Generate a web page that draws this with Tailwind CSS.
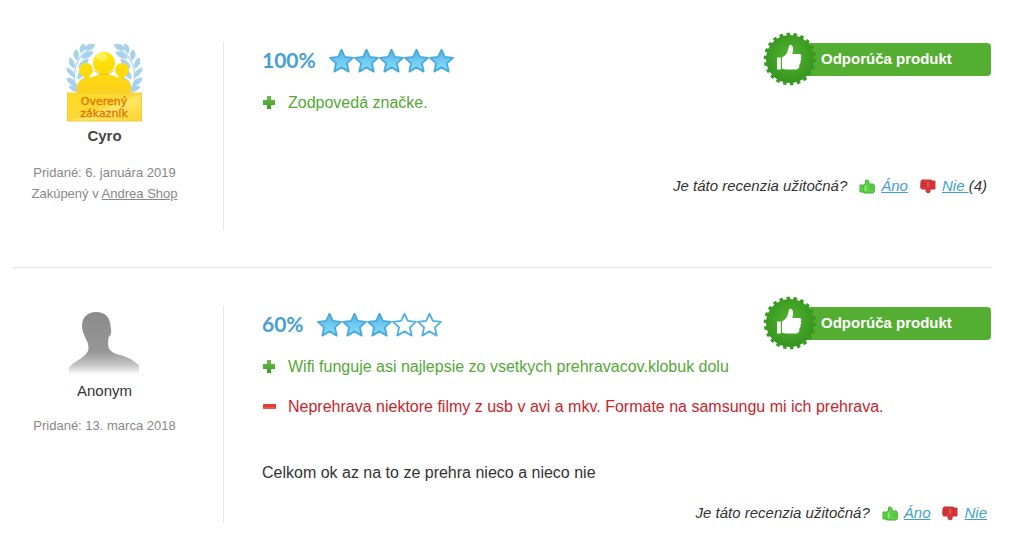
<!DOCTYPE html>
<html lang="sk">
<head>
    <meta charset="UTF-8">
    <meta name="viewport" content="width=device-width, initial-scale=1.0">
    <title>Recenzie</title>
    <script src="https://cdn.jsdelivr.net/npm/@tailwindcss/browser@4"></script>
</head>
<body class="bg-white font-['Liberation_Sans',Arial,sans-serif] text-[#333]">

    <!-- Shared icons -->
    <svg class="absolute size-0" aria-hidden="true">
        <defs>
            <linearGradient id="star-fill" x1="0" y1="0" x2="0" y2="1">
                <stop offset="0" stop-color="#58b4e6"/>
                <stop offset="1" stop-color="#84e0fa"/>
            </linearGradient>
            <radialGradient id="seal-fill" gradientUnits="userSpaceOnUse" cx="27" cy="24" r="29">
                <stop offset="0" stop-color="#52b52f"/>
                <stop offset="1" stop-color="#33921e"/>
            </radialGradient>
            <linearGradient id="plus-fill" x1="0" y1="0" x2="0" y2="1">
                <stop offset="0" stop-color="#6cc04a"/>
                <stop offset="1" stop-color="#3f9a25"/>
            </linearGradient>
        </defs>
        <symbol id="star" viewBox="0 0 25 26">
            <path d="M12.500 1.700l3.300 7.200 8.200.9-6.100 5.500 1.800 8.300-7.200-4.200-7.200 4.200 1.800-8.300L1 9.800l8.200-.9z" fill="url(#star-fill)" stroke="#49a8dc" stroke-width="1.800" stroke-linejoin="round"/>
        </symbol>
        <symbol id="star-empty" viewBox="0 0 25 26">
            <path d="M12.500 1.700l3.300 7.200 8.200.9-6.100 5.500 1.800 8.300-7.200-4.200-7.200 4.200 1.800-8.300L1 9.800l8.200-.9z" fill="#fff" stroke="#4fb0e0" stroke-width="1.800" stroke-linejoin="round"/>
        </symbol>
        <symbol id="plus" viewBox="0 0 14 14">
            <path d="M5 0h4v4h4v5H9v4H5V9H1V4h4z" fill="url(#plus-fill)"/>
        </symbol>
        <symbol id="minus" viewBox="0 0 14 14">
            <rect x="1" y="4" width="13" height="5" rx="1" fill="#e63a35"/>
            <path d="M2 8h11" stroke="#f0706a"/>
        </symbol>
        <symbol id="seal" viewBox="0 0 54 54">
            <circle cx="27" cy="27" r="24" fill="url(#seal-fill)"/>
            <!-- 22 teeth round the rim -->
            <circle cx="27" cy="27" r="24.500" fill="none" stroke="#389a22" stroke-width="3.600" pathLength="220" stroke-dasharray="5 5"/>
            <path d="M14 25.500h3.800v12H14zM19 25.200c3.500-.8 5.200-4 6.300-8.400.4-3.300 1.500-4.200 2.700-3.900 2.400.6 2.600 4.800 1.200 9.100h7c2.300 0 2.700 2.300 1.400 3.400 1.200 1.200.8 2.900-.4 3.600.8 1.300.3 2.700-.9 3.300.5 2.600-.7 5.200-2.900 5.200H24c-2 0-3-.2-5-.8z" fill="#fff"/>
        </symbol>
        <symbol id="thumb-up" viewBox="0 0 16 15">
            <path d="M1 6h3.500l2-1.500v-3C7.500.7 9.500 1 10 2.500V5h4.500l.8 1.500v6L14 14H5l-1-1H1z" fill="#5fd04a" stroke="#43ad35"/>
            <path d="M4.500 7v6M10.500 7.500h4M10.500 10h4" stroke="#43ad35" stroke-opacity=".6"/>
            <path d="M6.500 6.500v5.500" stroke="#9bea84" stroke-width="1.500"/>
        </symbol>
        <symbol id="thumb-down" viewBox="0 0 16 15">
            <path d="M1 2.500L2 1h9l1 1h3v8h-4l-1 1v2c-1 1.200-3.500 1-4-.5V10H1.500L.7 8.500z" fill="#d9363a" stroke="#c0393c"/>
            <path d="M11.500 2v7M1.500 4.500h4M1.500 7h4" stroke="#a51d22" stroke-opacity=".5"/>
            <path d="M8 3v5" stroke="#ea5a5c" stroke-width="1.500"/>
        </symbol>
    </svg>

    <main class="pl-3 pr-[23px] pt-[42px]">

        <article class="flex border-b border-[#e8e8e8] pb-[37px]">
            <aside class="w-[212px] shrink-0 border-r border-[#e8e8e8] pb-[26px] pr-[26px] text-center">
                <svg class="mx-auto h-[82px] w-[80px]" viewBox="0 0 80 82" role="img" aria-label="Overený zákazník">
                    <defs>
                        <linearGradient id="gold" gradientUnits="userSpaceOnUse" x1="0" y1="10" x2="0" y2="51">
                            <stop offset="0" stop-color="#ffe600"/>
                            <stop offset="1" stop-color="#fdd01c"/>
                        </linearGradient>
                        <linearGradient id="plate" x1="0" y1="0" x2="1" y2="1">
                            <stop offset="0" stop-color="#ffdc1c"/>
                            <stop offset=".5" stop-color="#ffd83a"/>
                            <stop offset=".55" stop-color="#ffe766"/>
                            <stop offset="1" stop-color="#ffd42a"/>
                        </linearGradient>
                        <g id="laurel">
                            <path d="M26 6C10 12 4 28 9 48" fill="none" stroke="#b5dcef" stroke-width="1.500"/>
                            <g fill="#a6d2ea" stroke="#a6d2ea">
                                <path d="M28 3c-4-2-9 0-11 4 4 2 9 0 11-4zM17 2c-4 1-5 6-3 9 3-2 5-6 3-9z"/>
                                <path d="M26 10c-5-1-10 2-11 6 5 1 10-2 11-6zM9 8c-3 3-3 7 1 10 2-4 2-8-1-10z"/>
                                <path d="M21 17c-5 1-9 4-9 9 5-1 9-4 9-9zM3 16c-2 4 0 8 4 10 1-4 0-8-4-10z"/>
                                <path d="M19 26c-5 2-9 6-8 11 5-2 8-6 8-11zM0 26c0 4 3 8 8 9-1-5-4-8-8-9z"/>
                                <path d="M19 35c-5 2-8 6-7 10 5-1 7-5 7-10zM0 36c1 5 5 8 10 8-2-5-5-8-10-8z"/>
                                <path d="M2 45c3 4 8 6 13 4-3-4-8-6-13-4z"/>
                            </g>
                        </g>
                    </defs>
                    <use href="#laurel" x="2"/>
                    <use href="#laurel" transform="matrix(-1 0 0 1 77 0)"/>
                    <g fill="url(#gold)">
                        <circle cx="21" cy="28" r="7"/>
                        <circle cx="57" cy="28" r="7"/>
                        <path d="M12 51c-1-9 2-14 8-14l-2-5h6l1 4c2-1 6-3 9-3v-5h10v5c3 0 7 1 9 3l1-4h6l-2 5c6 0 9 5 8 14z"/>
                        <circle cx="39" cy="21" r="11"/>
                    </g>
                    <path d="M29 28c4 6 16 6 20 0" fill="none" stroke="#eeb010" stroke-opacity=".7"/>
                    <ellipse cx="37" cy="15" rx="6" ry="4" fill="#fff36b" fill-opacity=".8"/>
                    <rect x="2.500" y="51" width="74" height="28" fill="url(#plate)" stroke="#f6c944"/>
                    <text x="39" y="63" text-anchor="middle" class="font-['DejaVu_Sans',sans-serif] text-[11px]" fill="#e07408" stroke="#e07408" stroke-width=".3">Overený</text>
                    <text x="39" y="75" text-anchor="middle" class="font-['DejaVu_Sans',sans-serif] text-[11px]" fill="#e07408" stroke="#e07408" stroke-width=".3">zákazník</text>
                </svg>
                <h3 class="mt-[2px] text-[15px] font-bold leading-5 text-[#444]">Cyro</h3>
                <p class="mt-4 text-[13px] leading-[21px] text-[#888]">Pridané: 6. januára 2019<br>Zakúpený v <a href="#" class="underline">Andrea Shop</a></p>
            </aside>

            <div class="min-w-0 grow pl-[38px]">
                <header class="flex h-9 items-start">
                    <strong class="font-[Lato,sans-serif] text-[21px] leading-9 text-[#46a0d0]">100%</strong>
                    <div class="ml-[13px] mt-1.5 flex" role="img" aria-label="5 z 5 hviezdičiek">
                        <svg class="h-[26px] w-[25px] overflow-visible"><use href="#star"/></svg>
                        <svg class="h-[26px] w-[25px]"><use href="#star"/></svg>
                        <svg class="h-[26px] w-[25px]"><use href="#star"/></svg>
                        <svg class="h-[26px] w-[25px]"><use href="#star"/></svg>
                        <svg class="h-[26px] w-[25px]"><use href="#star"/></svg>
                    </div>
                    <div class="relative ml-auto mr-px mt-px h-[33px] w-[201px] rounded bg-[#54ae31] pl-[31px] text-[15px] font-bold leading-8 text-white">
                        <svg class="absolute -left-[27px] -top-[11px] size-[54px]"><use href="#seal"/></svg>
                        Odporúča produkt
                    </div>
                </header>
                <ul class="mt-[15px] space-y-5 text-base leading-5">
                    <li class="flex items-center gap-3 text-[#54a836]"><svg class="size-[14px] shrink-0"><use href="#plus"/></svg>Zodpovedá značke.</li>
                </ul>
                <div class="mt-[63px] flex items-center justify-end pr-[5px] text-[15px] italic leading-5">
                    <span>Je táto recenzia užitočná?</span>
                    <svg class="ml-3 h-[15px] w-4"><use href="#thumb-up"/></svg>
                    <a href="#" class="ml-1.5 text-[#409fd0] underline">Áno</a>
                    <svg class="ml-3 h-[15px] w-4"><use href="#thumb-down"/></svg>
                    <a href="#" class="ml-1.5 whitespace-pre text-[#409fd0] underline">Nie </a>
                    <span>(4)</span>
                </div>
            </div>
        </article>

        <article class="mt-[38px] flex">
            <aside class="w-[212px] shrink-0 border-r border-[#e8e8e8] pr-[26px] text-center">
                <svg class="mx-auto h-[73px] w-[80px]" viewBox="0 0 80 73" role="img" aria-label="Anonym">
                    <defs>
                        <linearGradient id="shade" gradientUnits="userSpaceOnUse" x1="0" y1="6" x2="0" y2="72">
                            <stop offset="0" stop-color="#8b8b8b"/>
                            <stop offset=".6" stop-color="#969696"/>
                            <stop offset=".8" stop-color="#c4c4c4"/>
                            <stop offset=".95" stop-color="#fff"/>
                        </linearGradient>
                    </defs>
                    <path d="M17 20C17 11 23 6 31 6c9 0 14 5 14.500 14l.7 5c0 3-1 5-2.500 6-.7 4-1 7 0 11 3 5 7 6 13 7.500 7 2 12 5 17 9.500l1 11H4v-8c4-7 15-9 19-17 1-3 .5-6-1-10-2-4-5-10-5-15z" fill="url(#shade)"/>
                </svg>
                <h3 class="mt-[2px] text-[15px] leading-5">Anonym</h3>
                <p class="mt-[14px] text-[13px] leading-[21px] text-[#888]">Pridané: 13. marca 2018</p>
            </aside>

            <div class="min-w-0 grow pl-[38px]">
                <header class="flex h-9 items-start">
                    <strong class="font-[Lato,sans-serif] text-[21px] leading-9 text-[#46a0d0]">60%</strong>
                    <div class="ml-[13px] mt-1.5 flex" role="img" aria-label="3 z 5 hviezdičiek">
                        <svg class="h-[26px] w-[25px]"><use href="#star"/></svg>
                        <svg class="h-[26px] w-[25px]"><use href="#star"/></svg>
                        <svg class="h-[26px] w-[25px]"><use href="#star"/></svg>
                        <svg class="h-[26px] w-[25px]"><use href="#star-empty"/></svg>
                        <svg class="h-[26px] w-[25px]"><use href="#star-empty"/></svg>
                    </div>
                    <div class="relative ml-auto mr-px mt-px h-[33px] w-[201px] rounded bg-[#54ae31] pl-[31px] text-[15px] font-bold leading-8 text-white">
                        <svg class="absolute -left-[27px] -top-[11px] size-[54px]"><use href="#seal"/></svg>
                        Odporúča produkt
                    </div>
                </header>
                <ul class="mt-[15px] space-y-5 text-base leading-5">
                    <li class="flex items-center gap-3 text-[#54a836]"><svg class="size-[14px] shrink-0"><use href="#plus"/></svg>Wifi funguje asi najlepsie zo vsetkych prehravacov.klobuk dolu</li>
                    <li class="flex items-center gap-3 text-[#c9252b]"><svg class="size-[14px] shrink-0"><use href="#minus"/></svg>Neprehrava niektore filmy z usb v avi a mkv. Formate na samsungu mi ich prehrava.</li>
                </ul>
                <p class="mt-[46px] text-base leading-5">Celkom ok az na to ze prehra nieco a nieco nie</p>
                <div class="mt-5 flex items-center justify-end pr-[5px] text-[15px] italic leading-5">
                    <span>Je táto recenzia užitočná?</span>
                    <svg class="ml-3 h-[15px] w-4"><use href="#thumb-up"/></svg>
                    <a href="#" class="ml-1.5 text-[#409fd0] underline">Áno</a>
                    <svg class="ml-3 h-[15px] w-4"><use href="#thumb-down"/></svg>
                    <a href="#" class="ml-1.5 text-[#409fd0] underline">Nie</a>
                </div>
            </div>
        </article>

    </main>
</body>
</html>
